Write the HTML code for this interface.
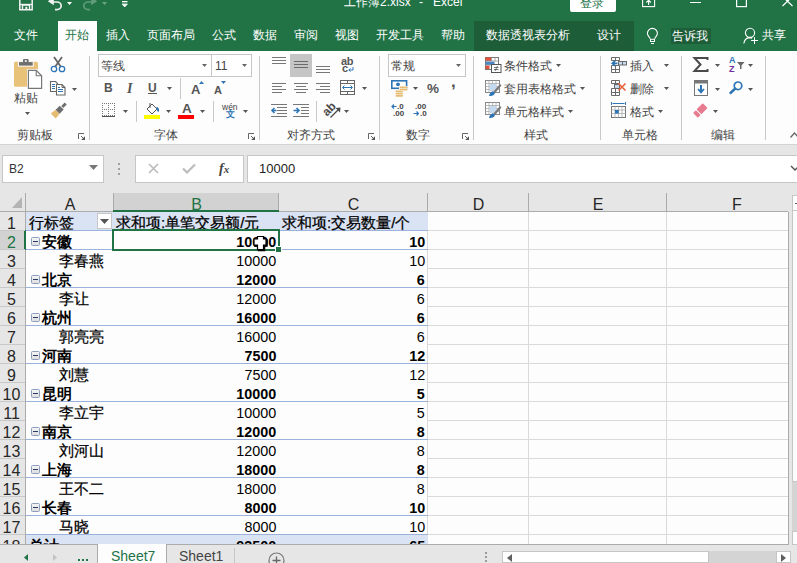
<!DOCTYPE html><html><head><meta charset="utf-8"><style>html,body{margin:0;padding:0;} body{width:797px;height:563px;overflow:hidden;position:relative;background:#e6e6e6;font-family:"Liberation Sans", sans-serif;} div{box-sizing:border-box;} svg{overflow:visible}</style></head><body><div style="position:absolute;left:0px;top:0px;width:797px;height:51px;background:#217346"></div><div style="position:absolute;left:474px;top:21px;width:160px;height:30px;background:#1d5e39"></div><div style="position:absolute;left:474px;top:50px;width:160px;height:1px;background:#175330"></div><div style="position:absolute;left:58px;top:21px;width:39px;height:30px;background:#fdfdfd"></div><svg style="position:absolute;left:19px;top:-4px;" width="15" height="15" viewBox="0 0 15 15"><path d="M0.8 0 V13.8 H13.2 V0" fill="none" stroke="#f2f2f2" stroke-width="1.5"/><path d="M0.8 8.5 H13.2" stroke="#f2f2f2" stroke-width="1.4"/><path d="M3.5 13.8 V9 H10.5 V13.8" fill="none" stroke="#f2f2f2" stroke-width="1.4"/><rect x="6.3" y="10.8" width="2" height="3" fill="#f2f2f2"/></svg><svg style="position:absolute;left:45px;top:-3px;" width="20" height="15" viewBox="0 0 20 15"><path d="M6.5 5 H12 A4.2 3.8 0 0 1 12 12.6 H10" fill="none" stroke="#f2f2f2" stroke-width="1.7"/><path d="M2.8 4.2 L8.8 0.3 L8.8 8.3 Z" fill="#f2f2f2"/></svg><svg style="position:absolute;left:67px;top:2px;" width="5" height="3" viewBox="0 0 5 3"><path d="M0 0 H5 L2.5 3 Z" fill="#fff"/></svg><svg style="position:absolute;left:80px;top:-3px;opacity:0.28" width="20" height="15" viewBox="0 0 20 15"><path d="M13.5 5 H8 A4.2 3.8 0 0 0 8 12.6 H10" fill="none" stroke="#fff" stroke-width="1.7"/><path d="M17.2 4.2 L11.2 0.3 L11.2 8.3 Z" fill="#fff"/></svg><svg style="position:absolute;left:102px;top:2px;opacity:0.35" width="5" height="3" viewBox="0 0 5 3"><path d="M0 0 H5 L2.5 3 Z" fill="#fff"/></svg><svg style="position:absolute;left:122px;top:0px;" width="6" height="8" viewBox="0 0 6 8"><rect x="0" y="1" width="5.5" height="1.3" fill="#fff"/><rect x="0" y="3.6" width="5.5" height="1.2" fill="#fff"/><path d="M0 4.6 H5.5 L2.75 7.2 Z" fill="#fff"/></svg><div style="position:absolute;left:344px;top:-4px;font-size:12px;line-height:12px;color:#fff;white-space:nowrap;">工作簿2.xlsx</div><div style="position:absolute;left:419px;top:-4px;font-size:12px;line-height:12px;color:#fff;white-space:nowrap;">-</div><div style="position:absolute;left:433px;top:-4px;font-size:12px;line-height:12px;color:#fff;white-space:nowrap;">Excel</div><div style="position:absolute;left:570px;top:-4px;width:46px;height:16px;background:#fff;border-radius:2px"></div><div style="position:absolute;left:580px;top:-3px;font-size:12px;line-height:12px;color:#217346;white-space:nowrap;">登录</div><svg style="position:absolute;left:642px;top:-3px;" width="14" height="10" viewBox="0 0 14 10"><rect x="0.6" y="0.6" width="12" height="9" fill="none" stroke="#fff" stroke-width="1.1"/><path d="M6.6 8 V3.5 M4.3 5.5 L6.6 3.2 L8.9 5.5" fill="none" stroke="#fff" stroke-width="1.1"/></svg><div style="position:absolute;left:690px;top:2px;width:11px;height:1px;background:#fff"></div><svg style="position:absolute;left:736px;top:-3px;" width="11" height="10" viewBox="0 0 11 10"><rect x="0.6" y="0.6" width="9.8" height="9" fill="none" stroke="#fff" stroke-width="1.2"/></svg><svg style="position:absolute;left:782px;top:-4px;" width="11" height="10" viewBox="0 0 11 10"><path d="M0.5 0.5 L10.5 10 M10.5 0.5 L0.5 10" stroke="#fff" stroke-width="1.2"/></svg><svg style="position:absolute;left:646px;top:27px;" width="14" height="18" viewBox="0 0 14 18"><path d="M4.3 11.8 L3 9.8 C1.8 8.3 1.4 7.4 1.4 6.4 A5 5 0 0 1 11.4 6.4 C11.4 7.4 11 8.3 9.8 9.8 L8.6 11.8" fill="none" stroke="#fff" stroke-width="1.1"/><rect x="4.5" y="12.3" width="4" height="2.2" fill="none" stroke="#fff" stroke-width="1"/><rect x="5" y="16" width="3" height="1" fill="#fff"/></svg><svg style="position:absolute;left:743px;top:27px;" width="16" height="18" viewBox="0 0 16 18"><circle cx="7" cy="5.8" r="4.6" fill="none" stroke="#fff" stroke-width="1.1"/><path d="M0.8 16.5 C1.3 13.2 3.5 10.8 6.5 10.6 M6.5 10.6 C7.5 10.6 8.5 10.9 9.2 11.2" fill="none" stroke="#fff" stroke-width="1.1"/><path d="M11.5 10.2 V17 M8 13.5 H15" stroke="#fff" stroke-width="1"/></svg><div style="position:absolute;left:14px;top:29px;font-size:12px;line-height:12px;color:#fff;white-space:nowrap;">文件</div><div style="position:absolute;left:65px;top:29px;font-size:12px;line-height:12px;color:#217346;white-space:nowrap;">开始</div><div style="position:absolute;left:106px;top:29px;font-size:12px;line-height:12px;color:#fff;white-space:nowrap;">插入</div><div style="position:absolute;left:147px;top:29px;font-size:12px;line-height:12px;color:#fff;white-space:nowrap;">页面布局</div><div style="position:absolute;left:212px;top:29px;font-size:12px;line-height:12px;color:#fff;white-space:nowrap;">公式</div><div style="position:absolute;left:253px;top:29px;font-size:12px;line-height:12px;color:#fff;white-space:nowrap;">数据</div><div style="position:absolute;left:294px;top:29px;font-size:12px;line-height:12px;color:#fff;white-space:nowrap;">审阅</div><div style="position:absolute;left:335px;top:29px;font-size:12px;line-height:12px;color:#fff;white-space:nowrap;">视图</div><div style="position:absolute;left:376px;top:29px;font-size:12px;line-height:12px;color:#fff;white-space:nowrap;">开发工具</div><div style="position:absolute;left:441px;top:29px;font-size:12px;line-height:12px;color:#fff;white-space:nowrap;">帮助</div><div style="position:absolute;left:486px;top:29px;font-size:12px;line-height:12px;color:#fff;white-space:nowrap;">数据透视表分析</div><div style="position:absolute;left:597px;top:29px;font-size:12px;line-height:12px;color:#fff;white-space:nowrap;">设计</div><div style="position:absolute;left:671px;top:28px;width:40px;height:16px;background:#1d5e39"></div><div style="position:absolute;left:672px;top:30px;font-size:12px;line-height:12px;color:#fff;white-space:nowrap;">告诉我</div><div style="position:absolute;left:762px;top:29px;font-size:12px;line-height:12px;color:#fff;white-space:nowrap;">共享</div><div style="position:absolute;left:0px;top:51px;width:797px;height:94px;background:#fdfdfd;border-bottom:1px solid #d4d4d4"></div><div style="position:absolute;left:89px;top:56px;width:1px;height:84px;background:#c8c8c8"></div><div style="position:absolute;left:259px;top:56px;width:1px;height:84px;background:#c8c8c8"></div><div style="position:absolute;left:379px;top:56px;width:1px;height:84px;background:#c8c8c8"></div><div style="position:absolute;left:473px;top:56px;width:1px;height:84px;background:#c8c8c8"></div><div style="position:absolute;left:600px;top:56px;width:1px;height:84px;background:#c8c8c8"></div><div style="position:absolute;left:681px;top:56px;width:1px;height:84px;background:#c8c8c8"></div><div style="position:absolute;left:765px;top:56px;width:1px;height:84px;background:#c8c8c8"></div><div style="position:absolute;left:17px;top:129px;font-size:12px;line-height:12px;color:#444444;white-space:nowrap;">剪贴板</div><div style="position:absolute;left:154px;top:129px;font-size:12px;line-height:12px;color:#444444;white-space:nowrap;">字体</div><div style="position:absolute;left:287px;top:129px;font-size:12px;line-height:12px;color:#444444;white-space:nowrap;">对齐方式</div><div style="position:absolute;left:406px;top:129px;font-size:12px;line-height:12px;color:#444444;white-space:nowrap;">数字</div><div style="position:absolute;left:524px;top:129px;font-size:12px;line-height:12px;color:#444444;white-space:nowrap;">样式</div><div style="position:absolute;left:622px;top:129px;font-size:12px;line-height:12px;color:#444444;white-space:nowrap;">单元格</div><div style="position:absolute;left:711px;top:129px;font-size:12px;line-height:12px;color:#444444;white-space:nowrap;">编辑</div><svg style="position:absolute;left:78px;top:133px;" width="8" height="8" viewBox="0 0 8 8"><path d="M0.5 6 V0.5 H6" fill="none" stroke="#666" stroke-width="1"/><path d="M3 3 L6 6" stroke="#666" stroke-width="1"/><path d="M7 3.2 V7 H3.2 Z" fill="#555"/></svg><svg style="position:absolute;left:248px;top:133px;" width="8" height="8" viewBox="0 0 8 8"><path d="M0.5 6 V0.5 H6" fill="none" stroke="#666" stroke-width="1"/><path d="M3 3 L6 6" stroke="#666" stroke-width="1"/><path d="M7 3.2 V7 H3.2 Z" fill="#555"/></svg><svg style="position:absolute;left:368px;top:133px;" width="8" height="8" viewBox="0 0 8 8"><path d="M0.5 6 V0.5 H6" fill="none" stroke="#666" stroke-width="1"/><path d="M3 3 L6 6" stroke="#666" stroke-width="1"/><path d="M7 3.2 V7 H3.2 Z" fill="#555"/></svg><svg style="position:absolute;left:462px;top:133px;" width="8" height="8" viewBox="0 0 8 8"><path d="M0.5 6 V0.5 H6" fill="none" stroke="#666" stroke-width="1"/><path d="M3 3 L6 6" stroke="#666" stroke-width="1"/><path d="M7 3.2 V7 H3.2 Z" fill="#555"/></svg><svg style="position:absolute;left:790px;top:132px;" width="9" height="6" viewBox="0 0 9 6"><path d="M0.5 5.5 L4.5 1 L8.5 5.5" fill="none" stroke="#666" stroke-width="1.3"/></svg><svg style="position:absolute;left:13px;top:58px;" width="31" height="32" viewBox="0 0 31 32">
<rect x="1" y="3.8" width="24" height="25" rx="1.6" fill="#e9c27a"/>
<rect x="5" y="3.8" width="15.7" height="4.8" fill="#fdfdfd"/>
<rect x="6" y="4.1" width="13.7" height="3.5" fill="#6e6e6e"/>
<rect x="10" y="1" width="5.6" height="4" rx="1" fill="#6e6e6e"/>
<rect x="11.8" y="2.2" width="2" height="1.6" fill="#fdfdfd"/>
<path d="M14 11 H24 L30 17 V31.5 H14 Z" fill="#fdfdfd"/>
<path d="M15.4 12.4 H23.2 L28.6 17.8 V30.4 H15.4 Z" fill="#fff" stroke="#777" stroke-width="1.2"/>
<path d="M23.2 12.4 V17.8 H28.6" fill="none" stroke="#777" stroke-width="1.1"/>
</svg><div style="position:absolute;left:14px;top:92px;font-size:12px;line-height:12px;color:#444;white-space:nowrap;">粘贴</div><svg style="position:absolute;left:25px;top:112px;" width="5" height="3" viewBox="0 0 5 3"><path d="M0 0 H5 L2.5 3 Z" fill="#555"/></svg><svg style="position:absolute;left:50px;top:56px;" width="16" height="17" viewBox="0 0 16 17">
<path d="M4 1 L11 11 M12 1 L5 11" stroke="#666" stroke-width="1.8"/>
<circle cx="4" cy="13" r="2.7" fill="none" stroke="#2e75b6" stroke-width="1.3"/>
<circle cx="12" cy="13" r="2.7" fill="none" stroke="#2e75b6" stroke-width="1.3"/>
</svg><svg style="position:absolute;left:49px;top:80px;" width="17" height="16" viewBox="0 0 17 16">
<path d="M1.5 1.5 H6.5 L8.5 3.5 V11.5 H1.5 Z" fill="#fff" stroke="#666" stroke-width="1.1"/>
<rect x="3" y="4" width="3" height="1" fill="#2e75b6"/>
<rect x="3" y="6" width="3" height="1" fill="#2e75b6"/>
<rect x="3" y="8" width="3" height="1" fill="#2e75b6"/>
<path d="M7.5 4.5 H13 L16 7.5 V15 H7.5 Z" fill="#fff" stroke="#666" stroke-width="1.1"/>
<path d="M13 4.5 V7.5 H16" fill="none" stroke="#666" stroke-width="1"/>
<rect x="9" y="7" width="2" height="1" fill="#2e75b6"/>
<rect x="9" y="9" width="5" height="1" fill="#2e75b6"/>
<rect x="9" y="11" width="5" height="1" fill="#2e75b6"/>
</svg><svg style="position:absolute;left:72px;top:88px;" width="5" height="3" viewBox="0 0 5 3"><path d="M0 0 H5 L2.5 3 Z" fill="#555"/></svg><svg style="position:absolute;left:49px;top:102px;" width="18" height="17" viewBox="0 0 18 17">
<g transform="translate(10.5,7.8) rotate(-45) scale(0.88)">
<path d="M-10 -4 L-3 -3.2 V3.2 L-10 4 Z" fill="#e5bc72"/>
<rect x="-3" y="-3.2" width="6.5" height="6.4" fill="#6e6e6e"/>
<rect x="4.5" y="-1.6" width="5.5" height="3.2" fill="#6e6e6e"/>
</g>
</svg><div style="position:absolute;left:98px;top:54px;width:114px;height:23px;background:#fff;border:1px solid #c6c6c6"></div><div style="position:absolute;left:101px;top:60px;font-size:12px;line-height:12px;color:#444;white-space:nowrap;">等线</div><svg style="position:absolute;left:202px;top:64px;" width="5" height="3" viewBox="0 0 5 3"><path d="M0 0 H5 L2.5 3 Z" fill="#666"/></svg><div style="position:absolute;left:211px;top:54px;width:41px;height:23px;background:#fff;border:1px solid #c6c6c6"></div><div style="position:absolute;left:215px;top:60px;font-size:12px;line-height:12px;color:#444;white-space:nowrap;">11</div><svg style="position:absolute;left:242px;top:64px;" width="5" height="3" viewBox="0 0 5 3"><path d="M0 0 H5 L2.5 3 Z" fill="#666"/></svg><div style="position:absolute;left:104px;top:82px;font-size:12px;line-height:12px;color:#555;white-space:nowrap;"><b>B</b></div><div style="position:absolute;left:127px;top:81px;font-size:14px;line-height:14px;color:#555;white-space:nowrap;"><b><i style="font-family:'Liberation Serif',serif">I</i></b></div><div style="position:absolute;left:148px;top:82px;font-size:12px;line-height:12px;color:#555;white-space:nowrap;"><b>U</b></div><div style="position:absolute;left:148px;top:93px;width:9px;height:1px;background:#555"></div><svg style="position:absolute;left:167px;top:87px;" width="5" height="3" viewBox="0 0 5 3"><path d="M0 0 H5 L2.5 3 Z" fill="#555"/></svg><div style="position:absolute;left:180px;top:78px;width:1px;height:21px;background:#c8c8c8"></div><div style="position:absolute;left:191px;top:83px;font-size:13px;line-height:13px;color:#555;white-space:nowrap;"><b>A</b></div><svg style="position:absolute;left:199px;top:81px;" width="6" height="3" viewBox="0 0 6 3"><path d="M0 3 H5 L2.5 0 Z" fill="#2e75b6"/></svg><div style="position:absolute;left:214px;top:85px;font-size:11px;line-height:11px;color:#555;white-space:nowrap;"><b>A</b></div><svg style="position:absolute;left:221px;top:81px;" width="6" height="3" viewBox="0 0 6 3"><path d="M0 0 H5 L2.5 3 Z" fill="#2e75b6"/></svg><svg style="position:absolute;left:102px;top:103px;" width="14" height="15" viewBox="0 0 14 15"><rect x="0" y="0" width="1" height="1" fill="#777"/><rect x="0" y="2" width="1" height="1" fill="#777"/><rect x="0" y="4" width="1" height="1" fill="#777"/><rect x="0" y="6" width="1" height="1" fill="#777"/><rect x="0" y="8" width="1" height="1" fill="#777"/><rect x="0" y="10" width="1" height="1" fill="#777"/><rect x="0" y="12" width="1" height="1" fill="#777"/><rect x="2" y="0" width="1" height="1" fill="#777"/><rect x="2" y="6" width="1" height="1" fill="#777"/><rect x="2" y="12" width="1" height="1" fill="#777"/><rect x="4" y="0" width="1" height="1" fill="#777"/><rect x="4" y="6" width="1" height="1" fill="#777"/><rect x="4" y="12" width="1" height="1" fill="#777"/><rect x="6" y="0" width="1" height="1" fill="#777"/><rect x="6" y="2" width="1" height="1" fill="#777"/><rect x="6" y="4" width="1" height="1" fill="#777"/><rect x="6" y="6" width="1" height="1" fill="#777"/><rect x="6" y="8" width="1" height="1" fill="#777"/><rect x="6" y="10" width="1" height="1" fill="#777"/><rect x="6" y="12" width="1" height="1" fill="#777"/><rect x="8" y="0" width="1" height="1" fill="#777"/><rect x="8" y="6" width="1" height="1" fill="#777"/><rect x="8" y="12" width="1" height="1" fill="#777"/><rect x="10" y="0" width="1" height="1" fill="#777"/><rect x="10" y="6" width="1" height="1" fill="#777"/><rect x="10" y="12" width="1" height="1" fill="#777"/><rect x="12" y="0" width="1" height="1" fill="#777"/><rect x="12" y="2" width="1" height="1" fill="#777"/><rect x="12" y="4" width="1" height="1" fill="#777"/><rect x="12" y="6" width="1" height="1" fill="#777"/><rect x="12" y="8" width="1" height="1" fill="#777"/><rect x="12" y="10" width="1" height="1" fill="#777"/><rect x="12" y="12" width="1" height="1" fill="#777"/><rect x="0" y="13" width="13" height="1" fill="#555"/></svg><svg style="position:absolute;left:123px;top:110px;" width="5" height="3" viewBox="0 0 5 3"><path d="M0 0 H5 L2.5 3 Z" fill="#555"/></svg><div style="position:absolute;left:136px;top:101px;width:1px;height:21px;background:#c8c8c8"></div><svg style="position:absolute;left:144px;top:102px;" width="17" height="18" viewBox="0 0 17 18">
<path d="M3 7 L8 2 L13 7 L8 12 Z" fill="#fff" stroke="#555" stroke-width="1"/>
<path d="M6 1 V6" stroke="#555" stroke-width="1"/>
<path d="M12.5 5.5 C14 6.5 14.5 8 14 9.5" fill="none" stroke="#2e75b6" stroke-width="1.8"/>
<rect x="0" y="13" width="16" height="4" fill="#ffff00"/>
</svg><svg style="position:absolute;left:166px;top:110px;" width="5" height="3" viewBox="0 0 5 3"><path d="M0 0 H5 L2.5 3 Z" fill="#555"/></svg><div style="position:absolute;left:182px;top:102px;font-size:13.5px;line-height:13.5px;color:#555;white-space:nowrap;"><b>A</b></div><div style="position:absolute;left:178px;top:115px;width:16px;height:4px;background:#ff0000"></div><svg style="position:absolute;left:200px;top:110px;" width="5" height="3" viewBox="0 0 5 3"><path d="M0 0 H5 L2.5 3 Z" fill="#555"/></svg><div style="position:absolute;left:213px;top:101px;width:1px;height:21px;background:#c8c8c8"></div><div style="position:absolute;left:222px;top:102.5px;font-size:8.5px;line-height:8.5px;color:#444;white-space:nowrap;">wén</div><div style="position:absolute;left:226px;top:110px;font-size:9px;line-height:9px;color:#2e75b6;white-space:nowrap;font-weight:bold">文</div><svg style="position:absolute;left:243px;top:110px;" width="5" height="3" viewBox="0 0 5 3"><path d="M0 0 H5 L2.5 3 Z" fill="#555"/></svg><div style="position:absolute;left:290px;top:54px;width:22px;height:23px;background:#c5c5c5"></div><div style="position:absolute;left:272px;top:57px;width:14px;height:1px;background:#777"></div><div style="position:absolute;left:272px;top:60px;width:14px;height:1px;background:#777"></div><div style="position:absolute;left:272px;top:63px;width:14px;height:1px;background:#777"></div><div style="position:absolute;left:294px;top:61px;width:14px;height:1px;background:#6a6a6a"></div><div style="position:absolute;left:294px;top:64px;width:14px;height:1px;background:#6a6a6a"></div><div style="position:absolute;left:294px;top:67px;width:14px;height:1px;background:#6a6a6a"></div><div style="position:absolute;left:316px;top:66px;width:14px;height:1px;background:#777"></div><div style="position:absolute;left:316px;top:69px;width:14px;height:1px;background:#777"></div><div style="position:absolute;left:316px;top:72px;width:14px;height:1px;background:#777"></div><div style="position:absolute;left:341px;top:56px;font-size:11px;line-height:11px;color:#555;white-space:nowrap;letter-spacing:-0.3px"><b>ab</b></div><div style="position:absolute;left:342px;top:63px;font-size:11px;line-height:11px;color:#555;white-space:nowrap;"><b>c</b></div><svg style="position:absolute;left:348px;top:67px;" width="6" height="5" viewBox="0 0 6 5"><path d="M5 0 V3 H1 M2.5 1.5 L0.8 3 L2.5 4.5" fill="none" stroke="#2e75b6" stroke-width="1"/></svg><div style="position:absolute;left:272px;top:83px;width:14px;height:1px;background:#777"></div><div style="position:absolute;left:272px;top:86px;width:10px;height:1px;background:#777"></div><div style="position:absolute;left:272px;top:89px;width:14px;height:1px;background:#777"></div><div style="position:absolute;left:272px;top:92px;width:10px;height:1px;background:#777"></div><div style="position:absolute;left:294px;top:83px;width:14px;height:1px;background:#777"></div><div style="position:absolute;left:296px;top:86px;width:10px;height:1px;background:#777"></div><div style="position:absolute;left:294px;top:89px;width:14px;height:1px;background:#777"></div><div style="position:absolute;left:296px;top:92px;width:10px;height:1px;background:#777"></div><div style="position:absolute;left:316px;top:83px;width:14px;height:1px;background:#777"></div><div style="position:absolute;left:320px;top:86px;width:10px;height:1px;background:#777"></div><div style="position:absolute;left:316px;top:89px;width:14px;height:1px;background:#777"></div><div style="position:absolute;left:320px;top:92px;width:10px;height:1px;background:#777"></div><svg style="position:absolute;left:340px;top:80px;" width="15" height="15" viewBox="0 0 15 15">
<rect x="0.5" y="0.5" width="14" height="14" fill="#fff" stroke="#666" stroke-width="1"/>
<path d="M0.5 3.5 H14.5 M0.5 11.5 H14.5 M7.5 0.5 V3.5 M7.5 11.5 V14.5" stroke="#666" stroke-width="1"/>
<path d="M3 7.5 H12" stroke="#2e75b6" stroke-width="1"/>
<path d="M4.5 5.5 L2.5 7.5 L4.5 9.5 M10.5 5.5 L12.5 7.5 L10.5 9.5" fill="none" stroke="#2e75b6" stroke-width="1"/>
</svg><svg style="position:absolute;left:362px;top:87px;" width="5" height="3" viewBox="0 0 5 3"><path d="M0 0 H5 L2.5 3 Z" fill="#555"/></svg><svg style="position:absolute;left:271px;top:103px;" width="17" height="15" viewBox="0 0 17 15">
<path d="M0 1.5 H16 M6 4.5 H16 M6 7.5 H16 M6 10.5 H16 M0 13.5 H16" stroke="#777" stroke-width="1"/>
<path d="M5.5 7.5 H1 M3.5 5 L1 7.5 L3.5 10" fill="none" stroke="#2e75b6" stroke-width="1.6"/>
</svg><svg style="position:absolute;left:293px;top:103px;" width="17" height="15" viewBox="0 0 17 15">
<path d="M0 1.5 H16 M8 4.5 H16 M8 7.5 H16 M8 10.5 H16 M0 13.5 H16" stroke="#777" stroke-width="1"/>
<path d="M0.5 7.5 H6 M3.5 5 L6 7.5 L3.5 10" fill="none" stroke="#2e75b6" stroke-width="1.6"/>
</svg><div style="position:absolute;left:316px;top:101px;width:1px;height:21px;background:#c8c8c8"></div><div style="position:absolute;left:322px;top:103px;width:14px;text-align:center;font-size:12px;line-height:12px;color:#4a4a4a;font-weight:bold;transform:rotate(-45deg);transform-origin:50% 50%;">ab</div><svg style="position:absolute;left:329px;top:106px;" width="13" height="13" viewBox="0 0 13 13"><path d="M1.5 11.5 L9.5 3.5" stroke="#4a4a4a" stroke-width="1.3"/><path d="M6.5 2 L11.5 1.5 L11 6.5 Z" fill="#4a4a4a"/></svg><svg style="position:absolute;left:344px;top:110px;" width="5" height="3" viewBox="0 0 5 3"><path d="M0 0 H5 L2.5 3 Z" fill="#555"/></svg><div style="position:absolute;left:388px;top:54px;width:78px;height:23px;background:#fff;border:1px solid #c6c6c6"></div><div style="position:absolute;left:391px;top:60px;font-size:12px;line-height:12px;color:#444;white-space:nowrap;">常规</div><svg style="position:absolute;left:456px;top:64px;" width="5" height="3" viewBox="0 0 5 3"><path d="M0 0 H5 L2.5 3 Z" fill="#666"/></svg><svg style="position:absolute;left:391px;top:80px;" width="17" height="17" viewBox="0 0 17 17">
<rect x="0.8" y="0.8" width="14.8" height="7.5" fill="#fff" stroke="#2e75b6" stroke-width="1.6"/>
<circle cx="7" cy="4.3" r="1.9" fill="#2e75b6"/>
<rect x="8" y="6" width="8.5" height="6.5" fill="#fdfdfd"/>
<rect x="8.5" y="6.5" width="8" height="1.7" rx="0.8" fill="#e5bc72"/>
<rect x="8.5" y="8.8" width="8" height="1.7" rx="0.8" fill="#e5bc72"/>
<rect x="4" y="10" width="8" height="7" fill="#fdfdfd"/>
<rect x="4.5" y="10.5" width="7.5" height="1.7" rx="0.8" fill="#e5bc72"/>
<rect x="4.5" y="12.8" width="7.5" height="1.7" rx="0.8" fill="#e5bc72"/>
<rect x="4.5" y="15.1" width="7.5" height="1.7" rx="0.8" fill="#e5bc72"/>
</svg><svg style="position:absolute;left:413px;top:87px;" width="5" height="3" viewBox="0 0 5 3"><path d="M0 0 H5 L2.5 3 Z" fill="#555"/></svg><div style="position:absolute;left:427px;top:82px;font-size:13.5px;line-height:13.5px;color:#555;white-space:nowrap;"><b>%</b></div><div style="position:absolute;left:451px;top:73px;font-size:17px;line-height:17px;color:#555;white-space:nowrap;"><b>,</b></div><div style="position:absolute;left:397px;top:103px;font-size:8px;line-height:8px;color:#444;white-space:nowrap;"><b>.0</b></div><div style="position:absolute;left:393px;top:110px;font-size:8px;line-height:8px;color:#444;white-space:nowrap;"><b>.00</b></div><svg style="position:absolute;left:391px;top:104px;" width="6" height="6" viewBox="0 0 6 6"><path d="M5.5 2.5 H1 M3 0.5 L1 2.5 L3 4.5" fill="none" stroke="#2e75b6" stroke-width="1.2"/></svg><div style="position:absolute;left:415px;top:103px;font-size:8px;line-height:8px;color:#444;white-space:nowrap;"><b>.00</b></div><div style="position:absolute;left:420px;top:110px;font-size:8px;line-height:8px;color:#444;white-space:nowrap;"><b>.0</b></div><svg style="position:absolute;left:413px;top:111px;" width="7" height="6" viewBox="0 0 7 6"><path d="M0.5 2.5 H5.5 M3.5 0.5 L5.5 2.5 L3.5 4.5" fill="none" stroke="#2e75b6" stroke-width="1.2"/></svg><svg style="position:absolute;left:485px;top:57px;" width="17" height="16" viewBox="0 0 17 16">
<rect x="0.5" y="0.5" width="13" height="12" fill="#fff" stroke="#777" stroke-width="1"/>
<rect x="0.5" y="0.5" width="6" height="3.5" fill="#e0503a"/>
<rect x="0.5" y="4.5" width="9" height="3.5" fill="#4a86c8"/>
<rect x="0.5" y="8.5" width="4" height="3.5" fill="#e0503a"/>
<path d="M6.5 0.5 V4 M10 0.5 V4 M0.5 4 H13.5 M0.5 8 H13.5" stroke="#999" stroke-width="0.8"/>
<rect x="6.5" y="7.5" width="9.5" height="8" fill="#fff" stroke="#555" stroke-width="1"/>
<path d="M9 10.5 H13.5 M9 12.5 H13.5 M12.5 9 L10 14" stroke="#555" stroke-width="0.8"/>
</svg><div style="position:absolute;left:504px;top:60px;font-size:12px;line-height:12px;color:#444;white-space:nowrap;">条件格式</div><svg style="position:absolute;left:556px;top:64px;" width="5" height="3" viewBox="0 0 5 3"><path d="M0 0 H5 L2.5 3 Z" fill="#555"/></svg><svg style="position:absolute;left:485px;top:80px;" width="17" height="17" viewBox="0 0 17 17">
<rect x="0.5" y="0.5" width="14" height="12" fill="#fff" stroke="#888" stroke-width="1"/>
<path d="M0.5 3.5 H14.5 M0.5 6.5 H14.5 M0.5 9.5 H14.5 M4 0.5 V12.5 M7.5 0.5 V12.5 M11 0.5 V12.5" stroke="#aaa" stroke-width="0.8"/>
<rect x="4.5" y="4" width="7" height="7" fill="#c5d9ee"/>
<path d="M8 12 L15 4 L16.5 5.5 L10 13 Z" fill="#7a7a7a"/>
<path d="M4 16 C4.5 13 6 11.5 8 11.5 L10 13 C9.5 15 7 16.5 4 16 Z" fill="#2e75b6"/>
</svg><div style="position:absolute;left:504px;top:83px;font-size:12px;line-height:12px;color:#444;white-space:nowrap;">套用表格格式</div><svg style="position:absolute;left:580px;top:87px;" width="5" height="3" viewBox="0 0 5 3"><path d="M0 0 H5 L2.5 3 Z" fill="#555"/></svg><svg style="position:absolute;left:485px;top:102px;" width="17" height="17" viewBox="0 0 17 17">
<rect x="0.5" y="0.5" width="14" height="12" fill="#fff" stroke="#888" stroke-width="1"/>
<path d="M0.5 3.5 H14.5 M0.5 6.5 H14.5 M0.5 9.5 H14.5 M4 0.5 V12.5 M7.5 0.5 V12.5 M11 0.5 V12.5" stroke="#aaa" stroke-width="0.8"/>
<rect x="4.5" y="4" width="7" height="7" fill="#c5d9ee"/>
<path d="M8 12 L15 4 L16.5 5.5 L10 13 Z" fill="#7a7a7a"/>
<path d="M4 16 C4.5 13 6 11.5 8 11.5 L10 13 C9.5 15 7 16.5 4 16 Z" fill="#2e75b6"/>
</svg><div style="position:absolute;left:504px;top:106px;font-size:12px;line-height:12px;color:#444;white-space:nowrap;">单元格样式</div><svg style="position:absolute;left:568px;top:110px;" width="5" height="3" viewBox="0 0 5 3"><path d="M0 0 H5 L2.5 3 Z" fill="#555"/></svg><svg style="position:absolute;left:611px;top:57px;" width="17" height="17" viewBox="0 0 17 17">
<path d="M0.5 0.5 H8.5 V3.5 H0.5 Z M4.5 0.5 V3.5" fill="#fff" stroke="#6a6a6a" stroke-width="1"/>
<rect x="7.5" y="4.5" width="8" height="3.5" fill="#c5d9ee" stroke="#6a6a6a" stroke-width="1"/>
<path d="M11.5 4.5 V8" stroke="#6a6a6a" stroke-width="1"/>
<path d="M0.5 8.5 H8.5 V15.5 H0.5 Z M4.5 8.5 V15.5 M0.5 12.5 H8.5" fill="#fff" stroke="#6a6a6a" stroke-width="1"/>
<path d="M6.5 6.3 H2 M4.2 3.8 L1.3 6.3 L4.2 8.8" fill="none" stroke="#2e75b6" stroke-width="1.7"/>
</svg><div style="position:absolute;left:630px;top:60px;font-size:12px;line-height:12px;color:#444;white-space:nowrap;">插入</div><svg style="position:absolute;left:664px;top:64px;" width="5" height="3" viewBox="0 0 5 3"><path d="M0 0 H5 L2.5 3 Z" fill="#555"/></svg><svg style="position:absolute;left:611px;top:80px;" width="17" height="17" viewBox="0 0 17 17">
<path d="M0.5 0.5 H8.5 V3.5 H0.5 Z M4.5 0.5 V3.5" fill="#fff" stroke="#6a6a6a" stroke-width="1"/>
<path d="M0.5 8.5 H8.5 V15.5 H0.5 Z M4.5 8.5 V15.5 M0.5 12.5 H8.5" fill="#fff" stroke="#6a6a6a" stroke-width="1"/>
<rect x="3.5" y="4.5" width="5" height="4" fill="#c5d9ee" stroke="#6a6a6a" stroke-width="1"/>
<path d="M7.5 3.5 L14.5 10.5 M14.5 3.5 L7.5 10.5" stroke="#e8603c" stroke-width="1.6"/>
</svg><div style="position:absolute;left:630px;top:83px;font-size:12px;line-height:12px;color:#444;white-space:nowrap;">删除</div><svg style="position:absolute;left:664px;top:87px;" width="5" height="3" viewBox="0 0 5 3"><path d="M0 0 H5 L2.5 3 Z" fill="#555"/></svg><svg style="position:absolute;left:611px;top:102px;" width="17" height="17" viewBox="0 0 17 17">
<path d="M0.5 0 V3 M14.5 0 V3 M1.5 1.5 H13.5" stroke="#2e75b6" stroke-width="1"/>
<rect x="0.5" y="4.5" width="14" height="11" fill="#fff" stroke="#777" stroke-width="1"/>
<path d="M0.5 8 H14.5 M0.5 11.5 H14.5 M4 4.5 V15.5 M7.5 4.5 V15.5 M11 4.5 V15.5" stroke="#aaa" stroke-width="0.8"/>
<rect x="4" y="8" width="3.8" height="3.5" fill="#2e75b6"/>
</svg><div style="position:absolute;left:630px;top:106px;font-size:12px;line-height:12px;color:#444;white-space:nowrap;">格式</div><svg style="position:absolute;left:658px;top:110px;" width="5" height="3" viewBox="0 0 5 3"><path d="M0 0 H5 L2.5 3 Z" fill="#555"/></svg><svg style="position:absolute;left:693px;top:57px;" width="16" height="15" viewBox="0 0 16 15"><path d="M14.5 3 V1 H1.5 L7.5 7.5 L1.5 14 H14.5 V12" fill="none" stroke="#4a4a4a" stroke-width="2"/></svg><svg style="position:absolute;left:715px;top:64px;" width="5" height="3" viewBox="0 0 5 3"><path d="M0 0 H5 L2.5 3 Z" fill="#555"/></svg><div style="position:absolute;left:729px;top:55.5px;font-size:9px;line-height:9px;color:#2e75b6;white-space:nowrap;"><b>A</b></div><div style="position:absolute;left:729px;top:65px;font-size:9px;line-height:9px;color:#7030a0;white-space:nowrap;"><b>Z</b></div><svg style="position:absolute;left:737px;top:62px;" width="8" height="7" viewBox="0 0 8 7"><path d="M0 0 H7.5 L4.5 3.5 V7 H3 V3.5 Z" fill="#666"/></svg><svg style="position:absolute;left:748px;top:64px;" width="5" height="3" viewBox="0 0 5 3"><path d="M0 0 H5 L2.5 3 Z" fill="#555"/></svg><svg style="position:absolute;left:694px;top:80px;" width="14" height="16" viewBox="0 0 14 16">
<rect x="0.5" y="0.5" width="13" height="15" fill="#fff" stroke="#777" stroke-width="1"/>
<rect x="0.5" y="0.5" width="13" height="3" fill="#777"/>
<path d="M7 5 V12" stroke="#2e75b6" stroke-width="2"/>
<path d="M4 9 L7 12.3 L10 9" fill="none" stroke="#2e75b6" stroke-width="1.8"/>
</svg><svg style="position:absolute;left:715px;top:88px;" width="5" height="3" viewBox="0 0 5 3"><path d="M0 0 H5 L2.5 3 Z" fill="#555"/></svg><svg style="position:absolute;left:729px;top:81px;" width="14" height="13" viewBox="0 0 14 13"><circle cx="9" cy="4.8" r="3.8" fill="none" stroke="#2e75b6" stroke-width="1.7"/><path d="M6.3 7.5 L1.5 12" stroke="#2e75b6" stroke-width="2.4" stroke-linecap="round"/></svg><svg style="position:absolute;left:748px;top:88px;" width="5" height="3" viewBox="0 0 5 3"><path d="M0 0 H5 L2.5 3 Z" fill="#555"/></svg><svg style="position:absolute;left:690px;top:100px;" width="20" height="20" viewBox="0 0 20 20"><g transform="translate(10.8,10) rotate(-45)"><rect x="-2.6" y="-3.4" width="8.8" height="6.8" rx="0.8" fill="#e77b90"/><rect x="-7.6" y="-3.4" width="4" height="6.8" rx="0.8" fill="#e77b90"/></g></svg><svg style="position:absolute;left:713px;top:110px;" width="5" height="3" viewBox="0 0 5 3"><path d="M0 0 H5 L2.5 3 Z" fill="#555"/></svg><div style="position:absolute;left:2px;top:155px;width:102px;height:28px;background:#fff;border:1px solid #c6c6c6"></div><div style="position:absolute;left:9px;top:163px;font-size:12px;line-height:12px;color:#333;white-space:nowrap;">B2</div><svg style="position:absolute;left:89px;top:165px;" width="9" height="5" viewBox="0 0 9 5"><path d="M0 0 L9 0 L4.5 5 Z" fill="#777"/></svg><div style="position:absolute;left:118px;top:163px;width:2px;height:2px;background:#a0a0a0"></div><div style="position:absolute;left:118px;top:168px;width:2px;height:2px;background:#a0a0a0"></div><div style="position:absolute;left:118px;top:173px;width:2px;height:2px;background:#a0a0a0"></div><div style="position:absolute;left:135px;top:155px;width:109px;height:28px;background:#fff;border:1px solid #c6c6c6"></div><svg style="position:absolute;left:148px;top:163px;" width="11" height="11" viewBox="0 0 11 11"><path d="M1 1 L10 10 M10 1 L1 10" stroke="#bcbcbc" stroke-width="1.7"/></svg><svg style="position:absolute;left:182px;top:163px;" width="14" height="11" viewBox="0 0 14 11"><path d="M1 5.5 L5 9.5 L13 1.5" fill="none" stroke="#bcbcbc" stroke-width="2.2"/></svg><div style="position:absolute;left:219px;top:161px;font-size:14px;line-height:14px;color:#444;white-space:nowrap;"><b><i style="font-family:'Liberation Serif',serif">f</i><i style="font-family:'Liberation Serif',serif;font-size:11px">x</i></b></div><div style="position:absolute;left:247px;top:155px;width:560px;height:28px;background:#fff;border:1px solid #c6c6c6"></div><div style="position:absolute;left:259px;top:162px;font-size:13px;line-height:13px;color:#222;white-space:nowrap;">10000</div><svg style="position:absolute;left:791px;top:166px;" width="8" height="5" viewBox="0 0 8 5"><path d="M0 0 L4 4 L8 0" fill="none" stroke="#555" stroke-width="1.5"/></svg><div style="position:absolute;left:0px;top:183px;width:797px;height:29px;background:#e6e6e6"></div><div style="position:absolute;left:26px;top:212px;width:762px;height:332px;background:#fdfdfd"></div><div style="position:absolute;left:114px;top:193px;width:164px;height:18px;background:#d2d2d2"></div><div style="position:absolute;left:25px;top:193px;width:1px;height:18px;background:#ababab"></div><div style="position:absolute;left:113px;top:193px;width:1px;height:18px;background:#ababab"></div><div style="position:absolute;left:278px;top:193px;width:1px;height:18px;background:#ababab"></div><div style="position:absolute;left:427px;top:193px;width:1px;height:18px;background:#ababab"></div><div style="position:absolute;left:528px;top:193px;width:1px;height:18px;background:#ababab"></div><div style="position:absolute;left:666px;top:193px;width:1px;height:18px;background:#ababab"></div><div style="position:absolute;left:0px;top:211px;width:788px;height:1px;background:#ababab"></div><div style="position:absolute;left:113px;top:210px;width:166px;height:2px;background:#217346"></div><svg style="position:absolute;left:12px;top:197px;" width="10" height="11" viewBox="0 0 10 11"><path d="M10 0 L10 11 L0 11 Z" fill="#b4b4b4"/></svg><div style="position:absolute;left:26px;top:196.76px;width:88px;text-align:center;font-size:16px;line-height:16px;color:#262626">A</div><div style="position:absolute;left:114px;top:196.76px;width:165px;text-align:center;font-size:16px;line-height:16px;color:#217346">B</div><div style="position:absolute;left:279px;top:196.76px;width:149px;text-align:center;font-size:16px;line-height:16px;color:#262626">C</div><div style="position:absolute;left:428px;top:196.76px;width:101px;text-align:center;font-size:16px;line-height:16px;color:#262626">D</div><div style="position:absolute;left:529px;top:196.76px;width:138px;text-align:center;font-size:16px;line-height:16px;color:#262626">E</div><div style="position:absolute;left:667px;top:196.76px;width:140px;text-align:center;font-size:16px;line-height:16px;color:#262626">F</div><div style="position:absolute;left:0px;top:212px;width:25px;height:332px;background:#e6e6e6"></div><div style="position:absolute;left:25px;top:212px;width:1px;height:332px;background:#ababab"></div><div style="position:absolute;left:0px;top:231px;width:25px;height:18px;background:#d2d2d2"></div><div style="position:absolute;left:24px;top:230px;width:2px;height:20px;background:#217346"></div><div style="position:absolute;left:26px;top:230px;width:762px;height:1px;background:#dadada"></div><div style="position:absolute;left:0px;top:230px;width:25px;height:1px;background:#c8c8c8"></div><div style="position:absolute;left:26px;top:249px;width:762px;height:1px;background:#dadada"></div><div style="position:absolute;left:0px;top:249px;width:25px;height:1px;background:#c8c8c8"></div><div style="position:absolute;left:26px;top:268px;width:762px;height:1px;background:#dadada"></div><div style="position:absolute;left:0px;top:268px;width:25px;height:1px;background:#c8c8c8"></div><div style="position:absolute;left:26px;top:287px;width:762px;height:1px;background:#dadada"></div><div style="position:absolute;left:0px;top:287px;width:25px;height:1px;background:#c8c8c8"></div><div style="position:absolute;left:26px;top:306px;width:762px;height:1px;background:#dadada"></div><div style="position:absolute;left:0px;top:306px;width:25px;height:1px;background:#c8c8c8"></div><div style="position:absolute;left:26px;top:325px;width:762px;height:1px;background:#dadada"></div><div style="position:absolute;left:0px;top:325px;width:25px;height:1px;background:#c8c8c8"></div><div style="position:absolute;left:26px;top:344px;width:762px;height:1px;background:#dadada"></div><div style="position:absolute;left:0px;top:344px;width:25px;height:1px;background:#c8c8c8"></div><div style="position:absolute;left:26px;top:363px;width:762px;height:1px;background:#dadada"></div><div style="position:absolute;left:0px;top:363px;width:25px;height:1px;background:#c8c8c8"></div><div style="position:absolute;left:26px;top:382px;width:762px;height:1px;background:#dadada"></div><div style="position:absolute;left:0px;top:382px;width:25px;height:1px;background:#c8c8c8"></div><div style="position:absolute;left:26px;top:401px;width:762px;height:1px;background:#dadada"></div><div style="position:absolute;left:0px;top:401px;width:25px;height:1px;background:#c8c8c8"></div><div style="position:absolute;left:26px;top:420px;width:762px;height:1px;background:#dadada"></div><div style="position:absolute;left:0px;top:420px;width:25px;height:1px;background:#c8c8c8"></div><div style="position:absolute;left:26px;top:439px;width:762px;height:1px;background:#dadada"></div><div style="position:absolute;left:0px;top:439px;width:25px;height:1px;background:#c8c8c8"></div><div style="position:absolute;left:26px;top:458px;width:762px;height:1px;background:#dadada"></div><div style="position:absolute;left:0px;top:458px;width:25px;height:1px;background:#c8c8c8"></div><div style="position:absolute;left:26px;top:477px;width:762px;height:1px;background:#dadada"></div><div style="position:absolute;left:0px;top:477px;width:25px;height:1px;background:#c8c8c8"></div><div style="position:absolute;left:26px;top:496px;width:762px;height:1px;background:#dadada"></div><div style="position:absolute;left:0px;top:496px;width:25px;height:1px;background:#c8c8c8"></div><div style="position:absolute;left:26px;top:515px;width:762px;height:1px;background:#dadada"></div><div style="position:absolute;left:0px;top:515px;width:25px;height:1px;background:#c8c8c8"></div><div style="position:absolute;left:26px;top:534px;width:762px;height:1px;background:#dadada"></div><div style="position:absolute;left:0px;top:534px;width:25px;height:1px;background:#c8c8c8"></div><div style="position:absolute;left:113px;top:212px;width:1px;height:332px;background:#dadada"></div><div style="position:absolute;left:278px;top:212px;width:1px;height:332px;background:#dadada"></div><div style="position:absolute;left:427px;top:212px;width:1px;height:332px;background:#dadada"></div><div style="position:absolute;left:528px;top:212px;width:1px;height:332px;background:#dadada"></div><div style="position:absolute;left:666px;top:212px;width:1px;height:332px;background:#dadada"></div><div style="position:absolute;left:788px;top:212px;width:1px;height:333px;background:#ababab"></div><div style="position:absolute;left:0px;top:544px;width:789px;height:1px;background:#ababab"></div><div style="position:absolute;left:0px;top:215.76px;width:23px;text-align:center;font-size:16px;line-height:16px;color:#262626">1</div><div style="position:absolute;left:0px;top:234.76px;width:23px;text-align:center;font-size:16px;line-height:16px;color:#217346">2</div><div style="position:absolute;left:0px;top:253.76px;width:23px;text-align:center;font-size:16px;line-height:16px;color:#262626">3</div><div style="position:absolute;left:0px;top:272.76px;width:23px;text-align:center;font-size:16px;line-height:16px;color:#262626">4</div><div style="position:absolute;left:0px;top:291.76px;width:23px;text-align:center;font-size:16px;line-height:16px;color:#262626">5</div><div style="position:absolute;left:0px;top:310.76px;width:23px;text-align:center;font-size:16px;line-height:16px;color:#262626">6</div><div style="position:absolute;left:0px;top:329.76px;width:23px;text-align:center;font-size:16px;line-height:16px;color:#262626">7</div><div style="position:absolute;left:0px;top:348.76px;width:23px;text-align:center;font-size:16px;line-height:16px;color:#262626">8</div><div style="position:absolute;left:0px;top:367.76px;width:23px;text-align:center;font-size:16px;line-height:16px;color:#262626">9</div><div style="position:absolute;left:0px;top:386.76px;width:23px;text-align:center;font-size:16px;line-height:16px;color:#262626">10</div><div style="position:absolute;left:0px;top:405.76px;width:23px;text-align:center;font-size:16px;line-height:16px;color:#262626">11</div><div style="position:absolute;left:0px;top:424.76px;width:23px;text-align:center;font-size:16px;line-height:16px;color:#262626">12</div><div style="position:absolute;left:0px;top:443.76px;width:23px;text-align:center;font-size:16px;line-height:16px;color:#262626">13</div><div style="position:absolute;left:0px;top:462.76px;width:23px;text-align:center;font-size:16px;line-height:16px;color:#262626">14</div><div style="position:absolute;left:0px;top:481.76px;width:23px;text-align:center;font-size:16px;line-height:16px;color:#262626">15</div><div style="position:absolute;left:0px;top:500.76px;width:23px;text-align:center;font-size:16px;line-height:16px;color:#262626">16</div><div style="position:absolute;left:0px;top:519.76px;width:23px;text-align:center;font-size:16px;line-height:16px;color:#262626">17</div><div style="position:absolute;left:0px;top:538.76px;width:23px;text-align:center;font-size:16px;line-height:16px;color:#262626">18</div><div style="position:absolute;left:26px;top:212px;width:402px;height:18px;background:#dae3f3"></div><div style="position:absolute;left:26px;top:535px;width:402px;height:9px;background:#dae3f3"></div><div style="position:absolute;left:26px;top:231px;width:401px;height:303px;background:#fdfdfd"></div><div style="position:absolute;left:26px;top:230px;width:402px;height:1px;background:#9bb3dc"></div><div style="position:absolute;left:26px;top:249px;width:402px;height:1px;background:#9bb3dc"></div><div style="position:absolute;left:26px;top:287px;width:402px;height:1px;background:#9bb3dc"></div><div style="position:absolute;left:26px;top:325px;width:402px;height:1px;background:#9bb3dc"></div><div style="position:absolute;left:26px;top:363px;width:402px;height:1px;background:#9bb3dc"></div><div style="position:absolute;left:26px;top:401px;width:402px;height:1px;background:#9bb3dc"></div><div style="position:absolute;left:26px;top:439px;width:402px;height:1px;background:#9bb3dc"></div><div style="position:absolute;left:26px;top:477px;width:402px;height:1px;background:#9bb3dc"></div><div style="position:absolute;left:26px;top:515px;width:402px;height:1px;background:#9bb3dc"></div><div style="position:absolute;left:26px;top:534px;width:402px;height:1px;background:#9bb3dc"></div><div style="position:absolute;left:29px;top:216px;font-size:15px;line-height:14px;font-weight:500;white-space:nowrap;-webkit-text-stroke:0.25px #000;">行标签</div><div style="position:absolute;left:116px;top:216px;font-size:15px;line-height:14px;font-weight:500;white-space:nowrap;-webkit-text-stroke:0.25px #000;">求和项:单笔交易额/元</div><div style="position:absolute;left:282px;top:216px;font-size:15px;line-height:14px;font-weight:500;white-space:nowrap;-webkit-text-stroke:0.25px #000;">求和项:交易数量/个</div><div style="position:absolute;left:97px;top:213px;width:15px;height:16px;background:#fff;border:1px solid #c6c6c6"></div><svg style="position:absolute;left:100px;top:219px;" width="9" height="5" viewBox="0 0 9 5"><path d="M0 0 L9 0 L4.5 5 Z" fill="#555"/></svg><div style="position:absolute;left:31px;top:237px;width:9px;height:9px;background:linear-gradient(#f4f4f4,#dedede);border:1px solid #8d9dbf;border-radius:1.5px"></div><div style="position:absolute;left:33px;top:241px;width:5px;height:1px;background:#2a3b6b"></div><div style="position:absolute;left:42px;top:235px;font-size:15px;line-height:14px;font-weight:bold;white-space:nowrap;">安徽</div><div style="position:absolute;right:521px;top:233.60px;font-size:15.5px;line-height:15.5px;font-weight:bold;white-space:nowrap;transform:scaleX(0.925);transform-origin:100% 50%">10000</div><div style="position:absolute;right:372px;top:233.60px;font-size:15.5px;line-height:15.5px;font-weight:bold;white-space:nowrap;transform:scaleX(0.925);transform-origin:100% 50%">10</div><div style="position:absolute;left:59px;top:254px;font-size:15px;line-height:14px;font-weight:500;white-space:nowrap;-webkit-text-stroke:0.25px #000;">李春燕</div><div style="position:absolute;right:521px;top:252.60px;font-size:15.5px;line-height:15.5px;font-weight:500;white-space:nowrap;transform:scaleX(0.925);transform-origin:100% 50%">10000</div><div style="position:absolute;right:372px;top:252.60px;font-size:15.5px;line-height:15.5px;font-weight:500;white-space:nowrap;transform:scaleX(0.925);transform-origin:100% 50%">10</div><div style="position:absolute;left:31px;top:275px;width:9px;height:9px;background:linear-gradient(#f4f4f4,#dedede);border:1px solid #8d9dbf;border-radius:1.5px"></div><div style="position:absolute;left:33px;top:279px;width:5px;height:1px;background:#2a3b6b"></div><div style="position:absolute;left:42px;top:273px;font-size:15px;line-height:14px;font-weight:bold;white-space:nowrap;">北京</div><div style="position:absolute;right:521px;top:271.60px;font-size:15.5px;line-height:15.5px;font-weight:bold;white-space:nowrap;transform:scaleX(0.925);transform-origin:100% 50%">12000</div><div style="position:absolute;right:372px;top:271.60px;font-size:15.5px;line-height:15.5px;font-weight:bold;white-space:nowrap;transform:scaleX(0.925);transform-origin:100% 50%">6</div><div style="position:absolute;left:59px;top:292px;font-size:15px;line-height:14px;font-weight:500;white-space:nowrap;-webkit-text-stroke:0.25px #000;">李让</div><div style="position:absolute;right:521px;top:290.60px;font-size:15.5px;line-height:15.5px;font-weight:500;white-space:nowrap;transform:scaleX(0.925);transform-origin:100% 50%">12000</div><div style="position:absolute;right:372px;top:290.60px;font-size:15.5px;line-height:15.5px;font-weight:500;white-space:nowrap;transform:scaleX(0.925);transform-origin:100% 50%">6</div><div style="position:absolute;left:31px;top:313px;width:9px;height:9px;background:linear-gradient(#f4f4f4,#dedede);border:1px solid #8d9dbf;border-radius:1.5px"></div><div style="position:absolute;left:33px;top:317px;width:5px;height:1px;background:#2a3b6b"></div><div style="position:absolute;left:42px;top:311px;font-size:15px;line-height:14px;font-weight:bold;white-space:nowrap;">杭州</div><div style="position:absolute;right:521px;top:309.60px;font-size:15.5px;line-height:15.5px;font-weight:bold;white-space:nowrap;transform:scaleX(0.925);transform-origin:100% 50%">16000</div><div style="position:absolute;right:372px;top:309.60px;font-size:15.5px;line-height:15.5px;font-weight:bold;white-space:nowrap;transform:scaleX(0.925);transform-origin:100% 50%">6</div><div style="position:absolute;left:59px;top:330px;font-size:15px;line-height:14px;font-weight:500;white-space:nowrap;-webkit-text-stroke:0.25px #000;">郭亮亮</div><div style="position:absolute;right:521px;top:328.60px;font-size:15.5px;line-height:15.5px;font-weight:500;white-space:nowrap;transform:scaleX(0.925);transform-origin:100% 50%">16000</div><div style="position:absolute;right:372px;top:328.60px;font-size:15.5px;line-height:15.5px;font-weight:500;white-space:nowrap;transform:scaleX(0.925);transform-origin:100% 50%">6</div><div style="position:absolute;left:31px;top:351px;width:9px;height:9px;background:linear-gradient(#f4f4f4,#dedede);border:1px solid #8d9dbf;border-radius:1.5px"></div><div style="position:absolute;left:33px;top:355px;width:5px;height:1px;background:#2a3b6b"></div><div style="position:absolute;left:42px;top:349px;font-size:15px;line-height:14px;font-weight:bold;white-space:nowrap;">河南</div><div style="position:absolute;right:521px;top:347.60px;font-size:15.5px;line-height:15.5px;font-weight:bold;white-space:nowrap;transform:scaleX(0.925);transform-origin:100% 50%">7500</div><div style="position:absolute;right:372px;top:347.60px;font-size:15.5px;line-height:15.5px;font-weight:bold;white-space:nowrap;transform:scaleX(0.925);transform-origin:100% 50%">12</div><div style="position:absolute;left:59px;top:368px;font-size:15px;line-height:14px;font-weight:500;white-space:nowrap;-webkit-text-stroke:0.25px #000;">刘慧</div><div style="position:absolute;right:521px;top:366.60px;font-size:15.5px;line-height:15.5px;font-weight:500;white-space:nowrap;transform:scaleX(0.925);transform-origin:100% 50%">7500</div><div style="position:absolute;right:372px;top:366.60px;font-size:15.5px;line-height:15.5px;font-weight:500;white-space:nowrap;transform:scaleX(0.925);transform-origin:100% 50%">12</div><div style="position:absolute;left:31px;top:389px;width:9px;height:9px;background:linear-gradient(#f4f4f4,#dedede);border:1px solid #8d9dbf;border-radius:1.5px"></div><div style="position:absolute;left:33px;top:393px;width:5px;height:1px;background:#2a3b6b"></div><div style="position:absolute;left:42px;top:387px;font-size:15px;line-height:14px;font-weight:bold;white-space:nowrap;">昆明</div><div style="position:absolute;right:521px;top:385.60px;font-size:15.5px;line-height:15.5px;font-weight:bold;white-space:nowrap;transform:scaleX(0.925);transform-origin:100% 50%">10000</div><div style="position:absolute;right:372px;top:385.60px;font-size:15.5px;line-height:15.5px;font-weight:bold;white-space:nowrap;transform:scaleX(0.925);transform-origin:100% 50%">5</div><div style="position:absolute;left:59px;top:406px;font-size:15px;line-height:14px;font-weight:500;white-space:nowrap;-webkit-text-stroke:0.25px #000;">李立宇</div><div style="position:absolute;right:521px;top:404.60px;font-size:15.5px;line-height:15.5px;font-weight:500;white-space:nowrap;transform:scaleX(0.925);transform-origin:100% 50%">10000</div><div style="position:absolute;right:372px;top:404.60px;font-size:15.5px;line-height:15.5px;font-weight:500;white-space:nowrap;transform:scaleX(0.925);transform-origin:100% 50%">5</div><div style="position:absolute;left:31px;top:427px;width:9px;height:9px;background:linear-gradient(#f4f4f4,#dedede);border:1px solid #8d9dbf;border-radius:1.5px"></div><div style="position:absolute;left:33px;top:431px;width:5px;height:1px;background:#2a3b6b"></div><div style="position:absolute;left:42px;top:425px;font-size:15px;line-height:14px;font-weight:bold;white-space:nowrap;">南京</div><div style="position:absolute;right:521px;top:423.60px;font-size:15.5px;line-height:15.5px;font-weight:bold;white-space:nowrap;transform:scaleX(0.925);transform-origin:100% 50%">12000</div><div style="position:absolute;right:372px;top:423.60px;font-size:15.5px;line-height:15.5px;font-weight:bold;white-space:nowrap;transform:scaleX(0.925);transform-origin:100% 50%">8</div><div style="position:absolute;left:59px;top:444px;font-size:15px;line-height:14px;font-weight:500;white-space:nowrap;-webkit-text-stroke:0.25px #000;">刘河山</div><div style="position:absolute;right:521px;top:442.60px;font-size:15.5px;line-height:15.5px;font-weight:500;white-space:nowrap;transform:scaleX(0.925);transform-origin:100% 50%">12000</div><div style="position:absolute;right:372px;top:442.60px;font-size:15.5px;line-height:15.5px;font-weight:500;white-space:nowrap;transform:scaleX(0.925);transform-origin:100% 50%">8</div><div style="position:absolute;left:31px;top:465px;width:9px;height:9px;background:linear-gradient(#f4f4f4,#dedede);border:1px solid #8d9dbf;border-radius:1.5px"></div><div style="position:absolute;left:33px;top:469px;width:5px;height:1px;background:#2a3b6b"></div><div style="position:absolute;left:42px;top:463px;font-size:15px;line-height:14px;font-weight:bold;white-space:nowrap;">上海</div><div style="position:absolute;right:521px;top:461.60px;font-size:15.5px;line-height:15.5px;font-weight:bold;white-space:nowrap;transform:scaleX(0.925);transform-origin:100% 50%">18000</div><div style="position:absolute;right:372px;top:461.60px;font-size:15.5px;line-height:15.5px;font-weight:bold;white-space:nowrap;transform:scaleX(0.925);transform-origin:100% 50%">8</div><div style="position:absolute;left:59px;top:482px;font-size:15px;line-height:14px;font-weight:500;white-space:nowrap;-webkit-text-stroke:0.25px #000;">王不二</div><div style="position:absolute;right:521px;top:480.60px;font-size:15.5px;line-height:15.5px;font-weight:500;white-space:nowrap;transform:scaleX(0.925);transform-origin:100% 50%">18000</div><div style="position:absolute;right:372px;top:480.60px;font-size:15.5px;line-height:15.5px;font-weight:500;white-space:nowrap;transform:scaleX(0.925);transform-origin:100% 50%">8</div><div style="position:absolute;left:31px;top:503px;width:9px;height:9px;background:linear-gradient(#f4f4f4,#dedede);border:1px solid #8d9dbf;border-radius:1.5px"></div><div style="position:absolute;left:33px;top:507px;width:5px;height:1px;background:#2a3b6b"></div><div style="position:absolute;left:42px;top:501px;font-size:15px;line-height:14px;font-weight:bold;white-space:nowrap;">长春</div><div style="position:absolute;right:521px;top:499.60px;font-size:15.5px;line-height:15.5px;font-weight:bold;white-space:nowrap;transform:scaleX(0.925);transform-origin:100% 50%">8000</div><div style="position:absolute;right:372px;top:499.60px;font-size:15.5px;line-height:15.5px;font-weight:bold;white-space:nowrap;transform:scaleX(0.925);transform-origin:100% 50%">10</div><div style="position:absolute;left:59px;top:520px;font-size:15px;line-height:14px;font-weight:500;white-space:nowrap;-webkit-text-stroke:0.25px #000;">马晓</div><div style="position:absolute;right:521px;top:518.60px;font-size:15.5px;line-height:15.5px;font-weight:500;white-space:nowrap;transform:scaleX(0.925);transform-origin:100% 50%">8000</div><div style="position:absolute;right:372px;top:518.60px;font-size:15.5px;line-height:15.5px;font-weight:500;white-space:nowrap;transform:scaleX(0.925);transform-origin:100% 50%">10</div><div style="position:absolute;left:29px;top:539px;font-size:15px;line-height:14px;font-weight:bold;white-space:nowrap;">总计</div><div style="position:absolute;right:521px;top:537.60px;font-size:15.5px;line-height:15.5px;font-weight:bold;white-space:nowrap;transform:scaleX(0.925);transform-origin:100% 50%">93500</div><div style="position:absolute;right:372px;top:537.60px;font-size:15.5px;line-height:15.5px;font-weight:bold;white-space:nowrap;transform:scaleX(0.925);transform-origin:100% 50%">65</div><div style="position:absolute;left:112px;top:229px;width:168px;height:22px;border:2px solid #217346"></div><div style="position:absolute;left:275px;top:246px;width:7px;height:7px;background:#fff"></div><div style="position:absolute;left:276px;top:247px;width:5px;height:5px;background:#217346"></div><svg style="position:absolute;left:252px;top:235px;" width="18" height="18" viewBox="0 0 18 18"><path d="M5.5 1.5 H11.5 V4 H14 V10 H11.5 V14.5 H5.5 V10 H2 V4 H5.5 Z" transform="translate(1,1)" fill="#000" stroke="#000" stroke-width="1.5"/><path d="M5.5 1.5 H11.5 V4 H14 V10 H11.5 V14.5 H5.5 V10 H2 V4 H5.5 Z" fill="#fff" stroke="#000" stroke-width="1.2"/></svg><div style="position:absolute;left:0px;top:545px;width:797px;height:18px;background:#e6e6e6"></div><div style="position:absolute;left:0px;top:544px;width:789px;height:1px;background:#ababab"></div><svg style="position:absolute;left:24px;top:554px;" width="4" height="7" viewBox="0 0 4 7"><path d="M4 0 L4 7 L0 3.5 Z" fill="#217346"/></svg><svg style="position:absolute;left:53px;top:554px;" width="4" height="7" viewBox="0 0 4 7"><path d="M0 0 L0 7 L4 3.5 Z" fill="#c4c4c4"/></svg><div style="position:absolute;left:78px;top:559px;width:2px;height:2px;background:#217346"></div><div style="position:absolute;left:82px;top:559px;width:2px;height:2px;background:#217346"></div><div style="position:absolute;left:86px;top:559px;width:2px;height:2px;background:#217346"></div><div style="position:absolute;left:97px;top:544px;width:1px;height:19px;background:#ababab"></div><div style="position:absolute;left:98px;top:544px;width:68px;height:19px;background:#fdfdfd"></div><div style="position:absolute;left:111px;top:549.45px;font-size:14px;line-height:14px;color:#217346;white-space:nowrap;">Sheet7</div><div style="position:absolute;left:166px;top:544px;width:1px;height:19px;background:#ababab"></div><div style="position:absolute;left:179px;top:549.45px;font-size:14px;line-height:14px;color:#444;white-space:nowrap;">Sheet1</div><div style="position:absolute;left:234px;top:548px;width:1px;height:15px;background:#c6c6c6"></div><svg style="position:absolute;left:268px;top:552px;" width="17" height="17" viewBox="0 0 17 17"><circle cx="8.5" cy="8.5" r="7.5" fill="none" stroke="#777" stroke-width="1.2"/><path d="M8.5 4.5 V12.5 M4.5 8.5 H12.5" stroke="#666" stroke-width="1.3"/></svg><div style="position:absolute;left:485px;top:552px;width:2px;height:2px;background:#9a9a9a"></div><div style="position:absolute;left:485px;top:556px;width:2px;height:2px;background:#9a9a9a"></div><div style="position:absolute;left:485px;top:560px;width:2px;height:2px;background:#9a9a9a"></div><div style="position:absolute;left:502px;top:551px;width:16px;height:12px;background:#fff;border:1px solid #c6c6c6"></div><svg style="position:absolute;left:507px;top:554px;" width="5" height="8" viewBox="0 0 5 8"><path d="M5 0 L5 8 L0 4 Z" fill="#606060"/></svg><div style="position:absolute;left:517px;top:551px;width:192px;height:12px;background:#fff;border:1px solid #c6c6c6;border-left:none"></div><div style="position:absolute;left:709px;top:551px;width:67px;height:12px;background:#d4d4d4"></div><div style="position:absolute;left:776px;top:551px;width:15px;height:12px;background:#fff;border:1px solid #c6c6c6"></div><svg style="position:absolute;left:781px;top:554px;" width="5" height="8" viewBox="0 0 5 8"><path d="M0 0 L0 8 L5 4 Z" fill="#606060"/></svg><div style="position:absolute;left:789px;top:183px;width:8px;height:362px;background:#e6e6e6"></div><div style="position:absolute;left:792px;top:195px;width:6px;height:16px;background:#fff;border:1px solid #c6c6c6;border-right:none"></div><div style="position:absolute;left:795px;top:203px;width:3px;height:1px;background:#606060"></div><div style="position:absolute;left:792px;top:210px;width:6px;height:272px;background:#fdfdfd;border:1px solid #c6c6c6;border-right:none"></div><div style="position:absolute;left:792px;top:482px;width:6px;height:49px;background:#d4d4d4"></div><div style="position:absolute;left:792px;top:531px;width:6px;height:14px;background:#fff;border:1px solid #c6c6c6;border-right:none"></div></body></html>
